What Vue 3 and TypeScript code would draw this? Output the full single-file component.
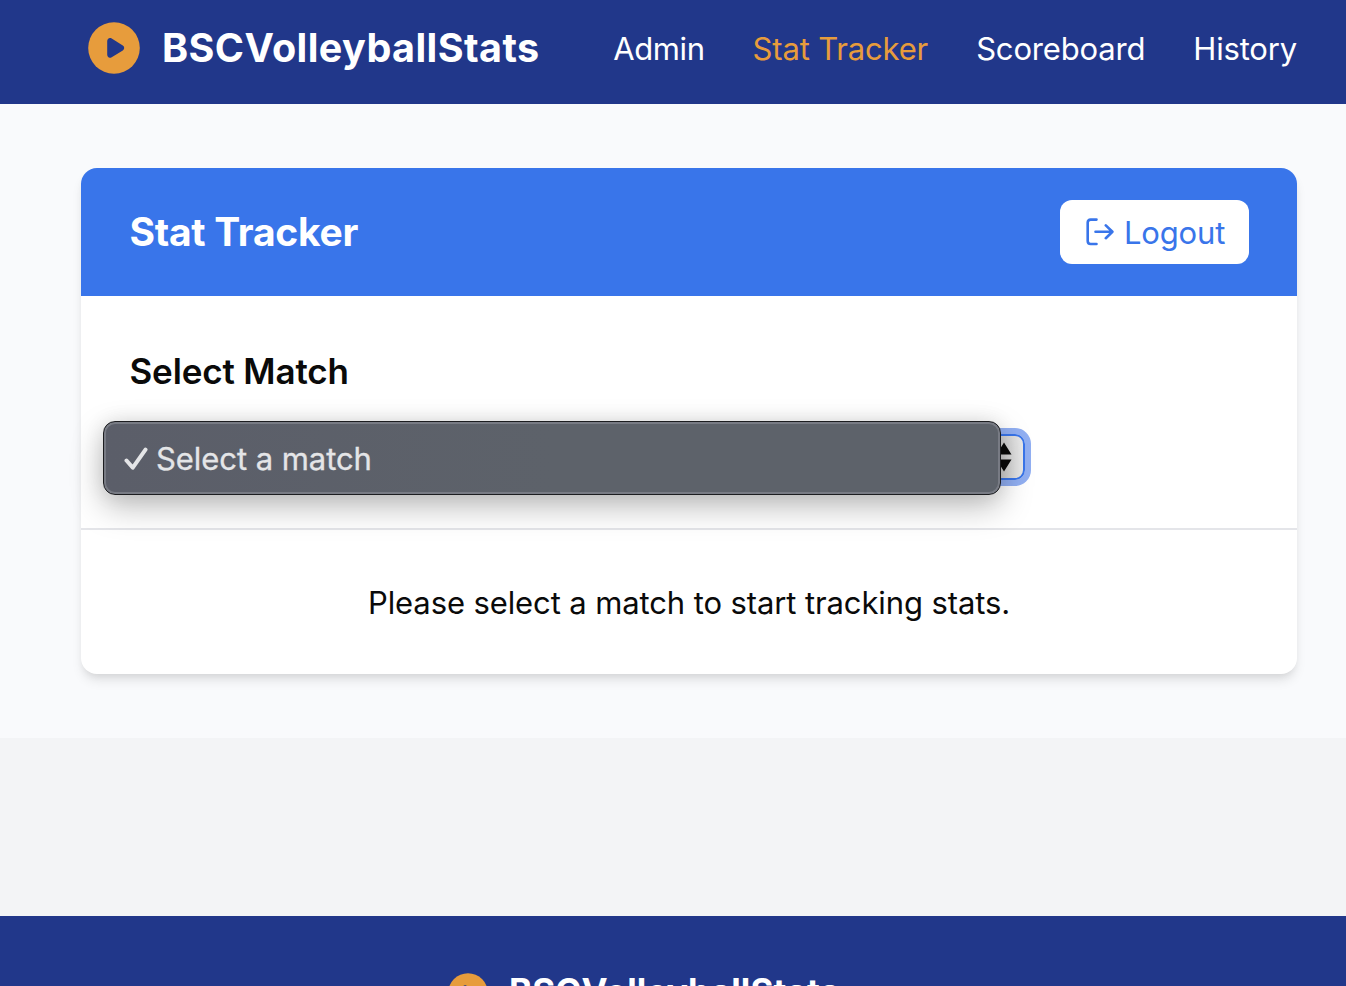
<script setup lang="ts">
import { ref } from 'vue'

interface NavItem {
  label: string
  key: string
}

const brand = 'BSCVolleyballStats'
const active = ref('tracker')
const links: NavItem[] = [
  { label: 'Admin', key: 'admin' },
  { label: 'Stat Tracker', key: 'tracker' },
  { label: 'Scoreboard', key: 'scoreboard' },
  { label: 'History', key: 'history' },
]
</script>

<template>
  <div class="page">
    <header class="topbar">
      <div class="brand">
        <svg class="brand-icon" viewBox="0 0 52 52">
          <circle cx="26" cy="26" r="25.8" fill="#e79c3c" />
          <path d="M19.2 19.3c0-2.7 2.2-4.2 4.5-2.9l11.1 7.2c1.9 1.2 1.9 3.6 0 4.8L23.7 35.2c-2.3 1.4-4.5.1-4.5-2.6z" fill="#21378a" />
        </svg>
        <span class="brand-name">{{ brand }}</span>
      </div>
      <nav class="nav">
        <a v-for="l in links" :key="l.key" :class="['nav-link', l.key, { active: l.key === active }]" @click="active = l.key">{{ l.label }}</a>
      </nav>
    </header>

    <main class="main">
      <section class="card">
        <div class="card-head">
          <h1 class="title">Stat Tracker</h1>
          <button class="logout">
            <svg class="logout-icon" viewBox="0 0 28 28" fill="none" stroke="#3975ea" stroke-width="2.6" stroke-linecap="round" stroke-linejoin="round">
              <path d="M10.5 1.6H4.600Q1.700 1.600 1.700 4.500v18.600q0 2.900 2.900 2.900h5.900" />
              <path d="M9.500 13.800h16.500M19.800 7.400l6.600 6.400-6.600 6.400" />
            </svg>
            <span class="logout-text">Logout</span>
          </button>
        </div>
        <div class="picker">
          <h2 class="subtitle">Select Match</h2>
          <div class="select">
            <svg class="arrows" viewBox="0 0 16 30"><path d="M8 .5l7.500 12H.5zM8 29.500L.5 17.500h15z" fill="#0a0a0a" /></svg>
            <div class="menu">
              <svg class="check" viewBox="0 0 24 24"><path d="M2.500 13.500l6.300 7.200L21.500 2.700" fill="none" stroke="#e4e5e7" stroke-width="4" stroke-linecap="round" stroke-linejoin="round" /></svg>
              <span class="option">Select a match</span>
            </div>
          </div>
        </div>
        <p class="message">Please select a match to start tracking stats.</p>
      </section>
    </main>

    <footer class="footer">
      <svg class="footer-icon" viewBox="0 0 52 52">
        <circle cx="26" cy="26" r="25.8" fill="#e79c3c" />
        <path d="M19.2 19.3c0-2.7 2.2-4.2 4.5-2.9l11.1 7.2c1.9 1.2 1.9 3.6 0 4.8L23.7 35.2c-2.3 1.4-4.5.1-4.5-2.6z" fill="#21378a" />
      </svg>
      <span class="footer-name">{{ brand }}</span>
    </footer>
  </div>
</template>

<style>
body {
  margin: 0;
  overflow: hidden;
}
</style>

<style scoped>
.page {
  display: flex;
  flex-direction: column;
  height: 986px;
  overflow: hidden;
  background: #f3f4f6;
  color: #0a0a0a;
  font-family: Inter, "Liberation Sans", sans-serif;
  box-sizing: border-box;
}
.topbar {
  display: flex;
  flex: none;
  justify-content: space-between;
  height: 104px;
  padding: 0 49px 0 88px;
  background: #21378a;
  color: #fff;
  box-sizing: border-box;
}
.brand {
  display: flex;
  height: 96px;
  align-items: center;
  gap: 22px;
}
.brand-icon {
  width: 52px;
  height: 52px;
}
.brand-name {
  font-size: 39.5px;
  font-weight: 700;
  letter-spacing: 0.42px;
  line-height: 56px;
  white-space: nowrap;
}
.nav {
  display: flex;
  height: 98px;
  align-items: center;
  gap: 48px;
}
.nav-link {
  font-size: 31px;
  letter-spacing: -0.17px;
  line-height: 48px;
  white-space: nowrap;
  cursor: pointer;
}
.nav-link.admin {
  letter-spacing: -0.4px;
}
.nav-link.active {
  color: #e79c3c;
}
.main {
  flex: none;
  height: 634px;
  padding: 64px 49px 64px 81px;
  background: #f9fafc;
  box-sizing: border-box;
}
.card {
  height: 506px;
  border-radius: 16px;
  background: #fff;
  box-shadow: 0 8px 12px -2px rgba(0, 0, 0, 0.1), 0 4px 8px -4px rgba(0, 0, 0, 0.1);
}
.card-head {
  display: flex;
  align-items: center;
  justify-content: space-between;
  height: 128px;
  padding: 0 48px;
  border-radius: 16px 16px 0 0;
  background: #3975ea;
  box-sizing: border-box;
}
.title {
  margin: 0;
  padding-left: 0.5px;
  color: #fff;
  font-size: 39px;
  font-weight: 700;
  letter-spacing: -0.27px;
  line-height: 56px;
}
.logout {
  display: flex;
  align-items: center;
  gap: 10px;
  width: 189px;
  height: 64px;
  padding: 0 0 0 26px;
  border: 0;
  border-radius: 12px;
  background: #fff;
  color: #3975ea;
  font-family: inherit;
  font-size: 31px;
  line-height: 48px;
}
.logout-icon {
  flex: none;
  width: 28px;
  height: 28px;
}
.logout-text {
  padding-top: 2px;
  letter-spacing: -0.18px;
}
.picker {
  height: 234px;
  padding: 47px 48px 0;
  border-bottom: 2px solid #e4e5e9;
  box-sizing: border-box;
}
.subtitle {
  margin: 0 0 35px;
  padding-left: 0.5px;
  font-size: 35px;
  font-weight: 600;
  letter-spacing: -0.15px;
  line-height: 56px;
}
.select {
  position: relative;
  display: flex;
  align-items: center;
  justify-content: flex-end;
  width: 896px;
  height: 46px;
  padding-right: 11px;
  border: 2px solid #3975ea;
  border-radius: 10px;
  background: linear-gradient(90deg, #ccc 97%, #e9e9e9 100%);
  box-shadow: 0 0 0 6px #91aff2;
  box-sizing: border-box;
}
.arrows {
  width: 16px;
  height: 30px;
}
.menu {
  position: absolute;
  left: -28px;
  top: -15px;
  display: flex;
  align-items: center;
  gap: 8px;
  width: 898px;
  height: 74px;
  padding-left: 20px;
  border: 1px solid #1c1d20;
  border-radius: 12px;
  background: linear-gradient(90deg, #5b5e69, #5d626a 50%);
  box-shadow: inset 0 0 0 2px #787b84, 0 12px 32px rgba(0, 0, 0, 0.26), 0 0 20px rgba(0, 0, 0, 0.09);
  color: #e4e5e7;
  box-sizing: border-box;
}
.check {
  width: 24px;
  height: 24px;
  margin-top: 2px;
}
.option {
  padding-top: 2px;
  font-size: 31px;
  letter-spacing: -0.06px;
  line-height: 48px;
  white-space: nowrap;
  -webkit-text-stroke: 0.3px #e4e5e7;
}
.message {
  margin: 0;
  padding: 49px 0 47px;
  font-size: 31px;
  letter-spacing: -0.11px;
  line-height: 48px;
  text-align: center;
}
.footer {
  display: flex;
  flex: none;
  align-items: center;
  gap: 21px;
  height: 150px;
  margin-top: 178px;
  padding-left: 448px;
  background: #21378a;
  color: #fff;
  box-sizing: border-box;
}
.footer-icon {
  width: 40px;
  height: 40px;
  margin-top: 4px;
}
.footer-name {
  font-size: 35px;
  font-weight: 700;
  letter-spacing: 0.15px;
  line-height: 56px;
  white-space: nowrap;
}
</style>
